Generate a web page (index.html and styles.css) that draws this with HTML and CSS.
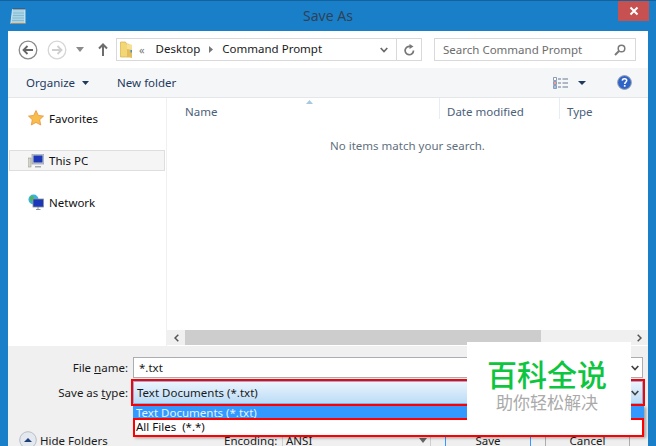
FILE: index.html
```html
<!DOCTYPE html>
<html lang="en">
<head>
<meta charset="utf-8">
<title>Save As</title>
<link rel="stylesheet" href="styles.css">
</head>
<body>
<div class="window">
  <header class="titlebar">
    <svg class="app-icon" width="16" height="18" viewBox="0 0 16 18"><path d="M2.500 2.500h12.500v14H.8z" fill="#a9d4e6"/><path d="M2.500 2.500h12.500v14H.8z" fill="none" stroke="#dff0f6" stroke-width=".8"/><path d="M3 6h11M3 8.500h11M2.500 11h11.500M2 13.500h12" stroke="#7fb5cc" stroke-width=".8"/><path d="M1 16.500h14.500" stroke="#b08a5a" stroke-width="1"/><path d="M4 1v2M6 1v2M8 1v2M10 1v2M12 1v2M14 1v2" stroke="#444" stroke-width=".8"/></svg>
    <div class="title">Save As</div>
    <div class="close"><svg width="10" height="10" viewBox="0 0 10 10"><path d="M1.500 1.500l7 7M8.500 1.500l-7 7" stroke="#fff" stroke-width="2"/></svg></div>
  </header>
  <div class="dialog">
    <nav class="navrow">
      <svg class="nav-btn" width="20" height="20" viewBox="0 0 20 20"><circle cx="10" cy="10" r="8.800" fill="#fff" stroke="#8a8a8a" stroke-width="1.300"/><path d="M15 10H6M9.500 6l-4 4 4 4" fill="none" stroke="#666" stroke-width="1.800"/></svg>
      <svg class="nav-btn" width="20" height="20" viewBox="0 0 20 20"><circle cx="10" cy="10" r="8.800" fill="#fff" stroke="#d6d6d6" stroke-width="1.300"/><path d="M5 10h9M10.500 6l4 4-4 4" fill="none" stroke="#cfcfcf" stroke-width="1.800"/></svg>
      <svg class="nav-drop" width="8" height="5" viewBox="0 0 8 5"><path d="M0 0h8L4 5z" fill="#8a8a8a"/></svg>
      <svg class="nav-up" width="10" height="13" viewBox="0 0 10 13"><path d="M5 13V2M1 5.500L5 1.500l4 4" fill="none" stroke="#6d6d6d" stroke-width="2"/></svg>
      <div class="address">
        <svg class="folder" width="13" height="18" viewBox="0 0 13 18"><path d="M.5 1h5l1 2h2v13H.5z" fill="#f3d776" stroke="#d4b048" stroke-width=".7"/><path d="M7 3l5 1v13l-5-1z" fill="#e4bd5c"/><path d="M7 3l5 1v5l-5-1z" fill="#f5e094"/><rect x="10.500" y="9" width="1.500" height="2.500" fill="#4d8fc0"/></svg>
        <span class="chev">&#171;</span>
        <span class="crumb">Desktop</span>
        <svg class="crumb-sep" width="4" height="7" viewBox="0 0 4 7"><path d="M0 0l4 3.500L0 7z" fill="#777"/></svg>
        <span class="crumb">Command Prompt</span>
        <span class="spacer"></span>
        <svg class="addr-down" width="8" height="6" viewBox="0 0 8 6"><path d="M.7 1l3.300 3.500L7.300 1" fill="none" stroke="#6a6a6a" stroke-width="1.700"/></svg>
        <span class="refresh"><svg width="11" height="12" viewBox="0 0 11 12"><path d="M9.500 6.500A4.200 4.200 0 1 1 6.500 2.500" fill="none" stroke="#777" stroke-width="1.700"/><path d="M5.500 0l4 2.500-4 2.500z" fill="#777"/></svg></span>
      </div>
      <div class="search">
        <span>Search Command Prompt</span>
        <svg width="12" height="12" viewBox="0 0 12 12"><circle cx="7.500" cy="4.500" r="3.300" fill="none" stroke="#7a7a7a" stroke-width="1.500"/><path d="M5 7l-4 4" stroke="#7a7a7a" stroke-width="2"/></svg>
      </div>
    </nav>
    <div class="toolbar">
      <span class="tool">Organize</span>
      <svg class="tool-caret" width="7" height="4" viewBox="0 0 7 4"><path d="M0 0h7L3.500 4z" fill="#1e3a5f"/></svg>
      <span class="tool newfolder">New folder</span>
      <span class="spacer"></span>
      <svg class="views" width="15" height="12" viewBox="0 0 15 12"><path d="M.5.500h3v3h-3zM.5 4.500h3v3h-3zM.5 8.500h3v3h-3z" fill="#fff" stroke="#6f83a8" stroke-width=".8"/><rect x="1.300" y="5.300" width="1.400" height="1.400" fill="#d43a3a"/><rect x="1.300" y="9.300" width="1.400" height="1.400" fill="#3f7fc9"/><path d="M5 2h3M9.500 2H15M5 6h3M9.500 6H15M5 10h3M9.500 10H15" stroke="#66788f" stroke-width="1"/></svg>
      <svg class="views-caret" width="8" height="4" viewBox="0 0 8 4"><path d="M0 0h8L4 4z" fill="#1e3a5f"/></svg>
      <svg class="help" width="15" height="15" viewBox="0 0 15 15"><circle cx="7.500" cy="7.500" r="6.900" fill="#2f63c8" stroke="#9aa3ad" stroke-width="1"/><path d="M5.300 5.600c.2-2.400 4.400-2.400 4.400 0 0 1.500-2 1.500-2 3.300" fill="none" stroke="#fff" stroke-width="1.500"/><rect x="6.900" y="10" width="1.600" height="1.700" fill="#fff"/></svg>
    </div>
    <main class="browser">
      <aside class="tree">
        <div class="tree-item first">
          <svg width="16" height="16" viewBox="0 0 16 16"><path d="M8 .5l2.300 4.900 5.200.7-3.800 3.600 1 5.300L8 12.400l-4.700 2.600 1-5.300L.5 6.100l5.200-.7z" fill="#f8bd4a" stroke="#e8933a" stroke-width=".8"/></svg>
          <span>Favorites</span>
        </div>
        <div class="tree-item pc">
          <svg width="16" height="14" viewBox="0 0 16 14"><rect x="0" y="4" width="3" height="9" fill="#d6d6c8" stroke="#8a8a80" stroke-width=".5"/><rect x="4" y="0" width="12" height="10" fill="#c8cdd4" stroke="#808890" stroke-width=".6"/><rect x="5.500" y="1.500" width="9" height="7" fill="#1c38b8"/><path d="M7 12h6v1.500H7z" fill="#a5a9ae"/></svg>
          <span>This PC</span>
        </div>
        <div class="tree-item net">
          <svg width="16" height="16" viewBox="0 0 16 16"><circle cx="5.500" cy="5.500" r="5" fill="#3cb2d8"/><path d="M2 3l3-1 1 3-3 3z" fill="#4fb848"/><rect x="5" y="5" width="10.500" height="8" fill="#1c38b8" stroke="#8a929a" stroke-width=".8"/><path d="M10 13v2.500M8 15.500h4.500" stroke="#8a929a" stroke-width="1"/></svg>
          <span>Network</span>
        </div>
      </aside>
      <section class="files">
        <div class="columns">
          <div class="col col-name">Name<svg class="sort" width="7" height="4" viewBox="0 0 7 4"><path d="M3.500 0L7 4H0z" fill="#a8c8e0"/></svg></div>
          <div class="col col-date">Date modified</div>
          <div class="col col-type">Type</div>
        </div>
        <div class="empty">No items match your search.</div>
        <div class="hscroll">
          <span class="arrow"><svg width="5" height="8" viewBox="0 0 5 8"><path d="M4.300.7L1 4l3.300 3.300" fill="none" stroke="#555" stroke-width="1.500"/></svg></span>
          <span class="thumb"></span>
          <span class="track"></span>
          <span class="arrow"><svg width="5" height="8" viewBox="0 0 5 8"><path d="M.7.700L4 4 .7 7.300" fill="none" stroke="#555" stroke-width="1.500"/></svg></span>
        </div>
      </section>
    </main>
    <form class="panel">
      <div class="field">
        <label class="field-label">File <u>n</u>ame:</label>
        <div class="combo filename"><span>*.txt</span><svg width="8" height="6" viewBox="0 0 8 6"><path d="M.7 1l3.300 3.500L7.300 1" fill="none" stroke="#444" stroke-width="1.700"/></svg></div>
      </div>
      <div class="field type-field">
        <label class="field-label">Save as <u>t</u>ype:</label>
        <div class="combo filetype"><span>Text Documents (*.txt)</span><svg width="8" height="6" viewBox="0 0 8 6"><path d="M.7 1l3.300 3.500L7.300 1" fill="none" stroke="#444" stroke-width="1.700"/></svg></div>
      </div>
      <div class="footer">
        <div class="hide">
          <svg width="18" height="18" viewBox="0 0 18 18"><circle cx="9" cy="9" r="8.300" fill="#e4e9f0" stroke="#b7bec8"/><path d="M5 11l4-4 4 4z" fill="#1e3f7a"/></svg>
          <span>Hide Folders</span>
        </div>
        <div class="encoding">
          <span class="enc-label"><u>E</u>ncoding:</span>
          <div class="enc-combo"><span>ANSI</span><svg width="8" height="5" viewBox="0 0 8 5"><path d="M0 0h8L4 5z" fill="#666"/></svg></div>
        </div>
        <button type="button" class="btn save"><u>S</u>ave</button>
        <button type="button" class="btn cancel">Cancel</button>
      </div>
    </form>
  </div>
  <div class="dropdown">
    <div class="opt selected">Text Documents (*.txt)</div>
    <div class="opt">All Files&nbsp; (*.*)</div>
  </div>
  <div class="redbox red-type"></div>
  <div class="redbox red-all"></div>
  <div class="watermark">
    <div class="wm-main">百科全说</div>
    <div class="wm-sub">助你轻松解决</div>
  </div>
</div>
</body>
</html>
```
FILE: styles.css
```css
* { box-sizing: border-box; }
html, body { margin: 0; padding: 0; }
body { width: 656px; height: 446px; overflow: hidden; font-family: "Noto Sans", "Open Sans", sans-serif; font-size: 11.5px; color: #1a1a1a; }
.window { position: relative; width: 656px; height: 446px; background: #1a7fc9; border-top: 1px solid #14629c; overflow: hidden; display: flex; flex-direction: column; }
.titlebar { height: 30px; flex: none; display: flex; align-items: flex-start; position: relative; }
.app-icon { margin: 6px 0 0 10px; }
.title { position: absolute; left: 0; right: 0; top: 5px; text-align: center; font-size: 14px; line-height: 20px; color: #2f4256; }
.close { position: absolute; left: 618px; top: 0; width: 31px; height: 20px; background: #c75050; display: flex; align-items: center; justify-content: center; }
.dialog { width: 640px; margin-left: 8px; flex: 1; min-height: 0; background: #fff; display: flex; flex-direction: column; }
.spacer { flex: 1; }
.navrow { height: 37px; flex: none; display: flex; align-items: center; padding: 0 11px 0 10px; }
.nav-btn { margin-right: 9px; }
.nav-btn + .nav-btn { margin-right: 0; }
.nav-drop { margin-left: 9px; }
.nav-up { margin-left: 14px; }
.address { width: 306px; height: 23px; margin-left: 8px; border: 1px solid #d9d9d9; display: flex; align-items: center; padding-left: 3px; gap: 6px; }
.folder { margin-right: 2px; }
.chev { color: #7a7a7a; font-size: 11px; margin: 0 5px 0 -2px; }
.crumb { line-height: 16px; position: relative; top: -1px; }
.crumb-sep { margin: 0 3px; }
.addr-down { margin-right: 4px; }
.refresh { width: 25px; height: 21px; border-left: 1px solid #d9d9d9; display: flex; align-items: center; justify-content: center; margin-left: -2px; }
.search { width: 202px; height: 23px; margin-left: 12px; border: 1px solid #d9d9d9; display: flex; align-items: center; justify-content: space-between; padding: 0 9px 0 8px; color: #6d6d6d; }
.toolbar { height: 30px; flex: none; background: #f5f6f7; border-bottom: 1px solid #e4e6e8; display: flex; align-items: center; padding: 0 16px 0 18px; }
.tool { color: #1e3a5f; }
.tool-caret { margin-left: 7px; }
.newfolder { margin-left: 28px; }
.views { margin-right: 10px; }
.views-caret { margin-right: 31px; }
.browser { flex: 1; min-height: 0; display: flex; }
.tree { width: 159px; flex: none; border-right: 1px solid #f0f0f0; padding-top: 10px; }
.tree-item { display: flex; align-items: center; gap: 5px; height: 20px; padding-left: 20px; color: #111; }
.tree-item.first { margin-top: 0; }
.tree-item.pc { margin: 22px 0 0 1px; height: 21px; width: 156px; background: #f5f5f5; border: 1px solid #dedede; padding-left: 18px; }
.tree-item.net { margin-top: 21px; }
.files { flex: 1; min-width: 0; display: flex; flex-direction: column; }
.columns { display: flex; height: 24px; flex: none; color: #4c607a; }
.col { height: 21px; padding-top: 5px; line-height: 18px; border-right: 1px solid #e6eef5; position: relative; padding-left: 7px; }
.col-name { width: 273px; padding-left: 18px; }
.col-date { width: 120px; }
.col-type { flex: 1; border-right: 0; }
.sort { position: absolute; left: 139px; top: 2px; }
.empty { flex: 1; text-align: center; color: #5f6f80; padding-top: 15px; line-height: 18px; }
.hscroll { height: 15px; flex: none; background: #f0f0f0; display: flex; margin-bottom: 1px; }
.arrow { width: 18px; display: flex; align-items: center; justify-content: center; }
.thumb { width: 356px; background: #cdcdcd; }
.track { flex: 1; }
.panel { height: 100px; flex: none; background: #f0f0f0; display: flex; flex-direction: column; padding-top: 11px; }
.field { display: flex; align-items: center; height: 21px; }
.type-field { margin-top: 3px; height: 23px; }
.field-label { width: 120px; text-align: right; margin-right: 5px; color: #1a1a1a; }
.combo { width: 510px; display: flex; align-items: center; justify-content: space-between; padding: 0 3px 0 5px; }
.filename { height: 21px; background: #fff; border: 1px solid #abadb3; }
.filetype { height: 23px; background: linear-gradient(#eaf4fd, #bcdcf6); border: 1px solid #7eb4ea; padding-left: 3px; }
.footer { display: flex; align-items: center; height: 26px; margin-top: 25px; }
.hide { display: flex; align-items: center; gap: 3px; margin-left: 11px; width: 205px; color: #1a1a1a; }
.encoding { display: flex; align-items: center; }
.enc-label { width: 58px; }
.enc-combo { width: 149px; height: 22px; background: #f0f0f0; border-left: 1px solid #cfcfcf; border-right: 1px solid #cfcfcf; padding: 0 3px; display: flex; align-items: center; justify-content: space-between; }
.btn { font: inherit; color: #1a1a1a; height: 22px; background: #efefef; border: 1px solid #adadad; padding: 0; }
.save { width: 86px; margin-left: 14px; border-color: #3399ff; }
.cancel { width: 85px; margin-left: 14px; }
.dropdown { position: absolute; left: 133px; top: 404px; width: 511px; background: #fff; box-shadow: 2px 2px 3px rgba(0,0,0,.35); }
.opt { height: 13px; line-height: 15px; padding-left: 3px; color: #111; white-space: nowrap; }
.opt + .opt { height: 18px; line-height: 18px; }
.selected { background: #3399ff; color: #e8f2ff; }
.redbox { position: absolute; border: 2px solid #f00; }
.red-type { left: 131px; top: 378px; width: 514px; height: 27px; }
.red-all { left: 133px; top: 417px; width: 511px; height: 19px; }
.watermark { position: absolute; left: 467px; top: 341px; width: 164px; height: 79px; background: #fff; display: flex; flex-direction: column; align-items: center; padding-right: 4px; }
.wm-main { font-family: "Noto Sans CJK SC", sans-serif; font-weight: 500; font-size: 30px; line-height: 34px; margin-top: 14px; color: #0ec53f; }
.wm-sub { font-family: "Noto Sans CJK SC", sans-serif; font-size: 17px; line-height: 20px; margin-top: 2px; color: #aaa; }
```
